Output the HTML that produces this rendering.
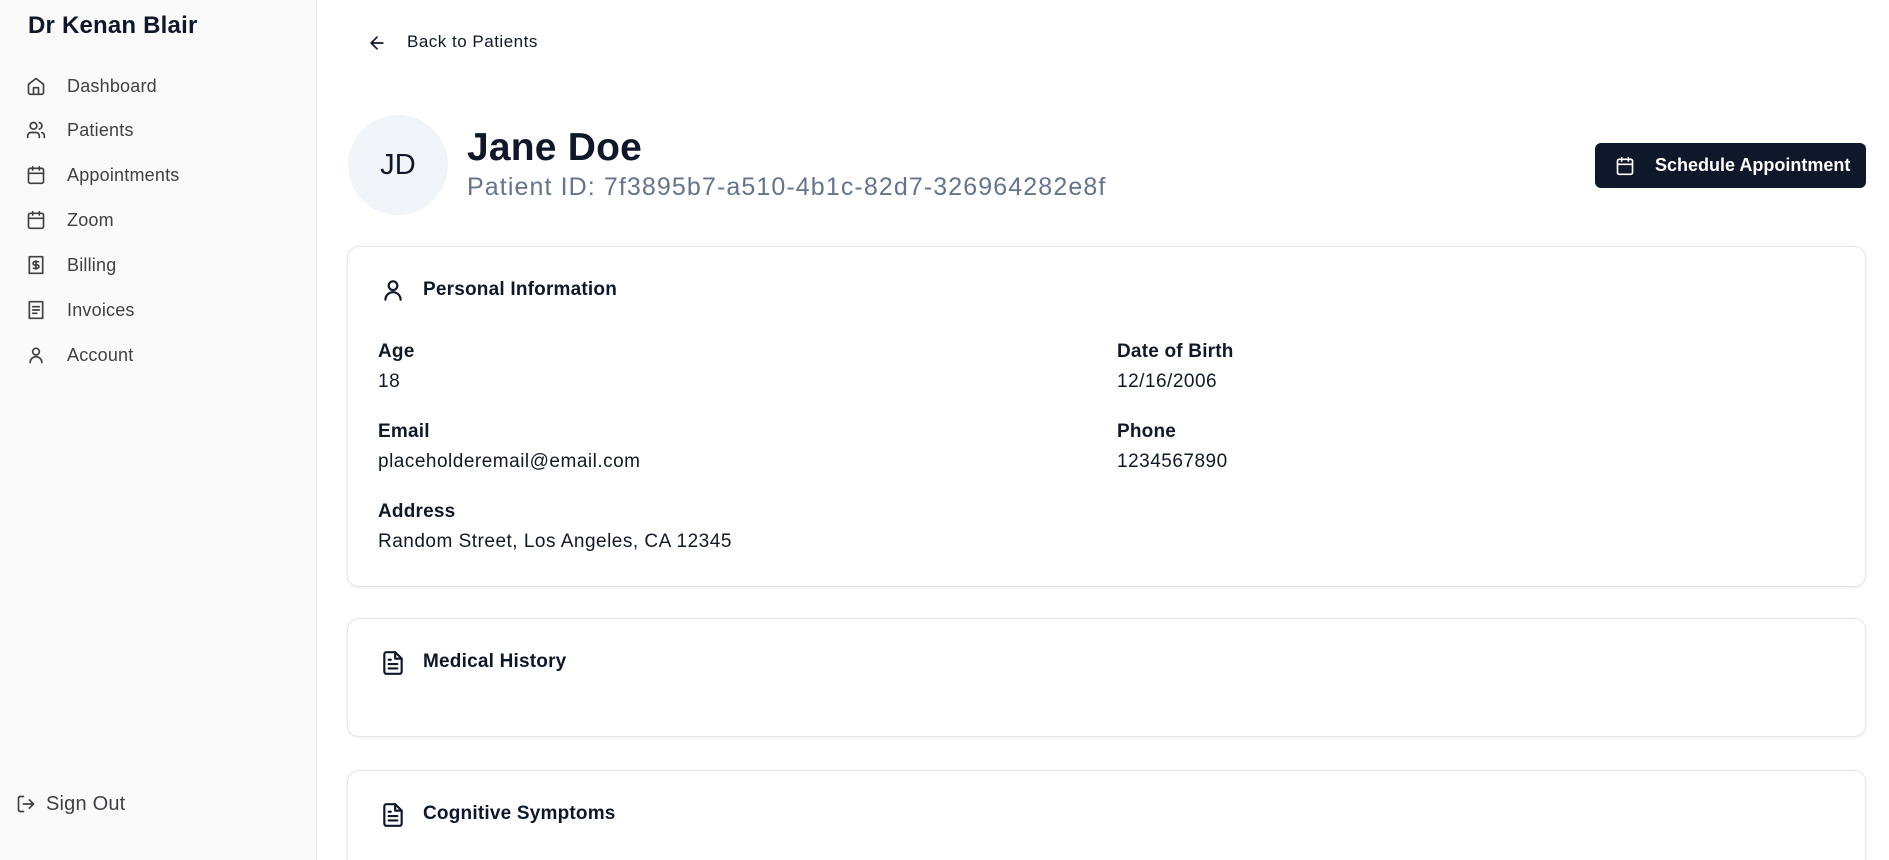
<!DOCTYPE html>
<html><head><meta charset="utf-8"><style>
*{box-sizing:border-box;margin:0;padding:0}
html,body{width:1889px;height:860px;overflow:hidden}
body{background:#fff;font-family:"Liberation Sans",Arial,sans-serif;color:#0f172a;position:relative;letter-spacing:0.2px}
#wrap{position:absolute;left:0;top:0;width:1889px;height:860px;overflow:hidden}
.side{position:absolute;left:0;top:0;width:317px;height:860px;background:#fafafa;border-right:1px solid #e5e7eb}
.brand{position:absolute;left:28px;top:12px;font-size:24px;font-weight:bold;color:#0f172a}
.nav{position:absolute;left:26px;height:24px;display:flex;align-items:center;font-size:18px;color:#3f3f46}
.nav svg{width:20px;height:20px;margin-right:21px}
.abs{position:absolute}
.card{position:absolute;left:347px;width:1519px;border:1px solid #e5e7eb;border-radius:12px;background:#fff;box-shadow:0 1px 3px rgba(0,0,0,.08)}
.ct{position:absolute;font-size:19px;font-weight:bold;color:#0f172a}
.lab{position:absolute;font-size:19px;color:#111827;font-weight:600}
.val{position:absolute;font-size:19px;color:#111827;letter-spacing:0.5px}
svg{fill:none;stroke:currentColor;stroke-width:2;stroke-linecap:round;stroke-linejoin:round}
</style></head><body><div id="wrap">
<div class="side">
<div class="brand">Dr Kenan Blair</div>
<div class="nav" style="top:74px"><svg viewBox="0 0 24 24"><path d="M3 10l9-7 9 7v10a2 2 0 0 1-2 2H5a2 2 0 0 1-2-2z"/><path d="M9 22v-8h6v8"/></svg>Dashboard</div>
<div class="nav" style="top:118px"><svg viewBox="0 0 24 24"><circle cx="9" cy="7" r="4"/><path d="M2 21v-2a4 4 0 0 1 4-4h6a4 4 0 0 1 4 4v2M16 3.1a4 4 0 0 1 0 7.8M22 21v-2a4 4 0 0 0-3-3.9"/></svg>Patients</div>
<div class="nav" style="top:163px"><svg viewBox="0 0 24 24"><rect x="3" y="4" width="18" height="18" rx="2"/><path d="M16 2v4M8 2v4M3 10h18"/></svg>Appointments</div>
<div class="nav" style="top:208px"><svg viewBox="0 0 24 24"><rect x="3" y="4" width="18" height="18" rx="2"/><path d="M16 2v4M8 2v4M3 10h18"/></svg>Zoom</div>
<div class="nav" style="top:253px"><svg viewBox="0 0 24 24"><path d="M4 2h16v20H4z"/><path d="M15 8h-4.5a2 2 0 0 0 0 4h3a2 2 0 0 1 0 4H9M12 17V7"/></svg>Billing</div>
<div class="nav" style="top:298px"><svg viewBox="0 0 24 24"><path d="M4 2h16v20H4z"/><path d="M8 8h8M8 12h8M8 16h5"/></svg>Invoices</div>
<div class="nav" style="top:343px"><svg viewBox="0 0 24 24"><circle cx="12" cy="8" r="4"/><path d="M5 21a7 7 0 0 1 14 0"/></svg>Account</div>
<div class="nav" style="top:792px;left:16px;font-size:20px"><svg viewBox="0 0 24 24" style="margin-right:10px"><path d="M9 21H5a2 2 0 0 1-2-2V5a2 2 0 0 1 2-2h4M16 17l5-5-5-5M21 12H9"/></svg>Sign Out</div>
</div>

<svg class="abs" viewBox="0 0 24 24" style="left:367px;top:33px;width:20px;height:20px"><path d="M19 12H5M12 19l-7-7 7-7"/></svg>
<div class="abs" style="left:407px;top:32px;font-size:17px;font-weight:500;color:#0f172a;letter-spacing:0.5px">Back to Patients</div>

<div class="abs" style="left:348px;top:115px;width:100px;height:100px;border-radius:50%;background:#f1f5f9;display:flex;align-items:center;justify-content:center;font-size:29px;color:#0f172a">JD</div>
<div class="abs" style="left:467px;top:126px;font-size:39px;font-weight:bold;color:#0f172a">Jane Doe</div>
<div class="abs" style="left:467px;top:173px;font-size:25px;color:#64748b;letter-spacing:1.1px">Patient ID: 7f3895b7-a510-4b1c-82d7-326964282e8f</div>

<div class="abs" style="left:1595px;top:143px;width:271px;height:45px;background:#0f172a;border-radius:6px;color:#fff;display:flex;align-items:center;padding-left:20px;font-size:18px;font-weight:bold;letter-spacing:0">
<svg viewBox="0 0 24 24" style="width:20px;height:20px;margin-right:20px"><rect x="3" y="4" width="18" height="18" rx="2"/><path d="M16 2v4M8 2v4M3 10h18"/></svg>Schedule Appointment</div>

<div class="card" style="top:246px;height:341px"></div>
<svg class="abs" viewBox="0 0 24 24" style="left:380px;top:277px;width:26px;height:26px"><circle cx="12" cy="8" r="4"/><path d="M5 21a7 7 0 0 1 14 0"/></svg>
<div class="ct" style="left:423px;top:279px">Personal Information</div>
<div class="lab" style="left:378px;top:341px">Age</div>
<div class="val" style="left:378px;top:371px">18</div>
<div class="lab" style="left:1117px;top:341px">Date of Birth</div>
<div class="val" style="left:1117px;top:371px">12/16/2006</div>
<div class="lab" style="left:378px;top:421px">Email</div>
<div class="val" style="left:378px;top:451px">placeholderemail@email.com</div>
<div class="lab" style="left:1117px;top:421px">Phone</div>
<div class="val" style="left:1117px;top:451px">1234567890</div>
<div class="lab" style="left:378px;top:501px">Address</div>
<div class="val" style="left:378px;top:531px">Random Street, Los Angeles, CA 12345</div>

<div class="card" style="top:618px;height:119px"></div>
<svg class="abs" viewBox="0 0 24 24" style="left:380px;top:650px;width:26px;height:26px"><path d="M14 2H6a2 2 0 0 0-2 2v16a2 2 0 0 0 2 2h12a2 2 0 0 0 2-2V8z"/><path d="M14 2v6h6M16 13H8M16 17H8M10 9H8"/></svg>
<div class="ct" style="left:423px;top:651px">Medical History</div>

<div class="card" style="top:770px;height:140px"></div>
<svg class="abs" viewBox="0 0 24 24" style="left:380px;top:802px;width:26px;height:26px"><path d="M14 2H6a2 2 0 0 0-2 2v16a2 2 0 0 0 2 2h12a2 2 0 0 0 2-2V8z"/><path d="M14 2v6h6M16 13H8M16 17H8M10 9H8"/></svg>
<div class="ct" style="left:423px;top:803px">Cognitive Symptoms</div>
</div></body></html>
